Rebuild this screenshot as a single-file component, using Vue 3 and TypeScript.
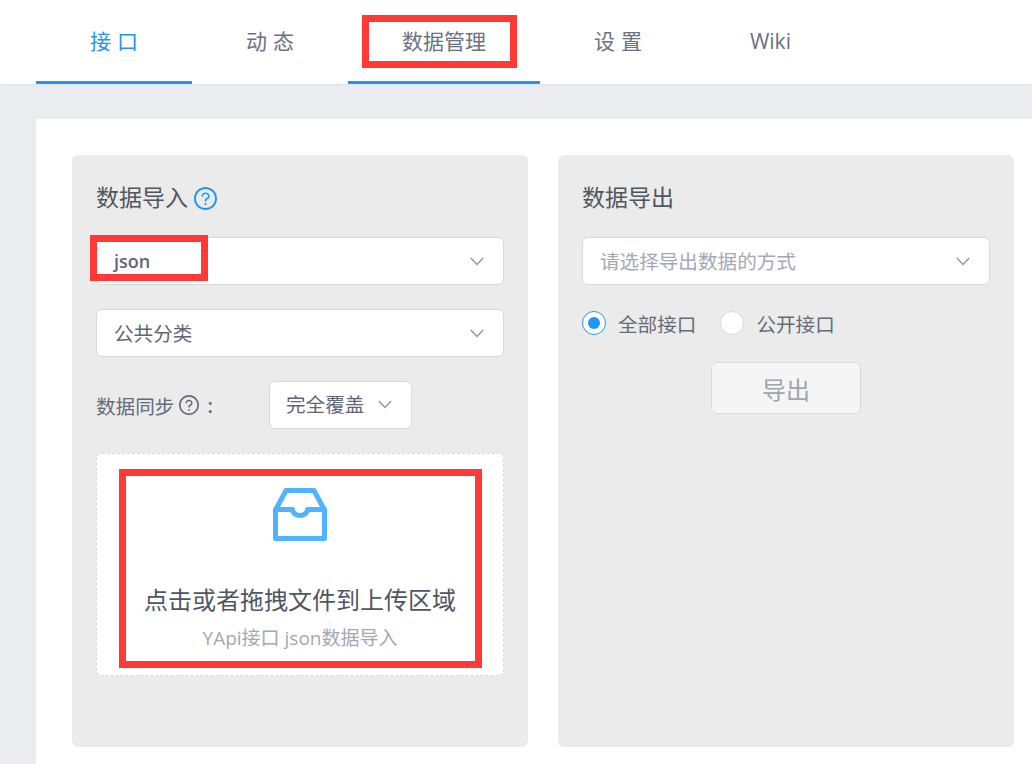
<script setup lang="ts">
const tabs: { label: string; active?: boolean; underlined?: boolean }[] = [
  { label: '接 口', active: true, underlined: true },
  { label: '动 态' },
  { label: '数据管理', underlined: true },
  { label: '设 置' },
  { label: 'Wiki' },
]
const q1 = 'M512 64C264.6 64 64 264.6 64 512s200.6 448 448 448 448-200.6 448-448S759.4 64 512 64zm0 820c-205.4 0-372-166.6-372-372s166.6-372 372-372 372 166.6 372 372-166.6 372-372 372z'
const q2 = 'M623.6 316.7C593.6 290.4 554 276 512 276s-81.6 14.5-111.6 40.7C369.2 344 352 380.7 352 420v7.6c0 4.4 3.6 8 8 8h48c4.4 0 8-3.6 8-8V420c0-44.1 43.1-80 96-80s96 35.9 96 80c0 31.1-22 59.6-56.1 72.7-21.2 8.1-39.2 22.3-52.1 40.9-13.1 19-19.9 41.8-19.9 64.9V620c0 4.4 3.6 8 8 8h48c4.4 0 8-3.6 8-8v-22.7a48.3 48.3 0 0 1 30.9-44.8c59-22.7 97.1-74.7 97.1-132.5.1-39.3-17.1-76-48.3-103.3z'
const q3 = 'M472 732a40 40 0 1 0 80 0 40 40 0 1 0-80 0z'
</script>

<template>
  <div class="page">
    <nav class="tabs">
      <div
        v-for="t in tabs"
        :key="t.label"
        class="tab"
        :class="{ active: t.active, underlined: t.underlined }"
      >{{ t.label }}</div>
      <div class="mark mark-tab"></div>
    </nav>
    <main class="content">
      <div class="card">
        <section class="panel">
          <h3 class="title">
            数据导入
            <svg class="q q-blue" viewBox="64 64 896 896"><path :d="q1" /><path :d="q2" /><path :d="q3" /></svg>
          </h3>
          <div class="select">
            <span class="json">json</span>
            <svg class="chev" viewBox="0 0 16 10"><path d="M1 1l7 7.500L15 1" /></svg>
            <div class="mark mark-json"></div>
          </div>
          <div class="select">
            <span>公共分类</span>
            <svg class="chev" viewBox="0 0 16 10"><path d="M1 1l7 7.500L15 1" /></svg>
          </div>
          <div class="sync">
            <div class="sync-label">
              数据同步
              <svg class="q q-grey" viewBox="64 64 896 896"><path :d="q1" /><path :d="q2" /><path :d="q3" /></svg>
              <span class="colon">:</span>
            </div>
            <div class="select small">
              <span>完全覆盖</span>
              <svg class="chev" viewBox="0 0 16 10"><path d="M1 1l7 7.500L15 1" /></svg>
            </div>
          </div>
          <div class="dragger">
            <svg class="inbox" viewBox="0 0 54 53">
              <path d="M2.500 22L13 2.500h28L51.500 22" />
              <path d="M2.500 21.500H19.500a7.500 6 0 0 0 15 0h17v29h-49z" />
            </svg>
            <p class="drag-text">点击或者拖拽文件到上传区域</p>
            <p class="drag-hint">YApi接口 json数据导入</p>
            <div class="mark mark-drag"></div>
          </div>
        </section>
        <section class="panel">
          <h3 class="title">数据导出</h3>
          <div class="select placeholder">
            <span>请选择导出数据的方式</span>
            <svg class="chev" viewBox="0 0 16 10"><path d="M1 1l7 7.500L15 1" /></svg>
          </div>
          <div class="radios">
            <label class="radio"><i class="dot checked"></i>全部接口</label>
            <label class="radio"><i class="dot"></i>公开接口</label>
          </div>
          <div class="btn-row"><button class="btn" disabled>导出</button></div>
        </section>
      </div>
    </main>
  </div>
</template>

<style>
html, body { margin: 0; background: #ebecf0; overflow: hidden; }
</style>

<style scoped>
* { box-sizing: border-box; }
.page {
  width: 1032px;
  height: 764px;
  overflow: hidden;
  background: #ebecf0;
  font-family: "Open Sans", "Noto Sans CJK SC", sans-serif;
  color: #5b6270;
}
.tabs {
  position: relative;
  display: flex;
  height: 84px;
  padding-left: 36px;
  background: #fff;
  box-shadow: 0 1px 2px rgba(0, 0, 0, 0.04);
}
.tab {
  height: 84px;
  padding: 0 54px;
  font-size: 21px;
  word-spacing: 0.500px;
  line-height: 83px;
  color: #6a7180;
  white-space: pre;
  border-bottom: 3px solid transparent;
}
.tab.underlined { border-bottom-color: #2395f1; }
.tab.active { color: #2395f1; }
.mark {
  position: absolute;
  border: 7px solid #ff3838;
  pointer-events: none;
}
.mark-tab { left: 362px; top: 15px; width: 155px; height: 53px; }
.content { padding: 35px 0 0 36px; }
.card {
  display: flex;
  gap: 30px;
  height: 660px;
  padding: 36px 18px 0 36px;
  background: #fff;
}
.panel {
  width: 456px;
  height: 592px;
  padding: 24px;
  background: #ebebeb;
  border-radius: 6px;
}
.title {
  display: flex;
  align-items: center;
  gap: 6px;
  height: 36px;
  margin: 0 0 22px;
  font-size: 23px;
  font-weight: 400;
  line-height: 36px;
  color: #50565f;
}
.title > .q { margin-top: 2px; }
.q { fill: currentColor; }
.q-blue { width: 23px; height: 23px; color: #2395f1; }
.q-grey { width: 20px; height: 20px; color: #656b78; margin-left: 5px; }
.select {
  position: relative;
  display: flex;
  align-items: center;
  justify-content: space-between;
  height: 48px;
  margin-bottom: 24px;
  padding: 0 19px 2px 17px;
  background: #fff;
  border: 1px solid #d9d9d9;
  border-radius: 6px;
  font-size: 19.600px;
  color: #5f6675;
}
.json { font-weight: 600; font-size: 18px; margin-top: 2px; }
.placeholder { color: #a3a8b4; }
.chev {
  width: 14px;
  height: 9px;
  margin-top: 2px;
  fill: none;
  stroke: #9097a5;
  stroke-width: 1.600;
}
.mark-json { left: -7px; top: -3px; width: 118px; height: 46px; }
.sync { display: flex; align-items: center; margin-bottom: 24px; }
.sync-label {
  display: flex;
  align-items: center;
  width: 173px;
  font-size: 19.600px;
  color: #656b78;
}
.colon { margin-left: 8px; font-weight: 600; }
.select.small {
  width: 143px;
  margin: 0;
  padding-left: 16px;
  padding-bottom: 4px;
}
.dragger {
  position: relative;
  height: 223px;
  padding-top: 34px;
  text-align: center;
  background: #fff;
  border: 1px dashed #d9d9d9;
  border-radius: 6px;
}
.inbox {
  display: block;
  width: 54px;
  height: 53px;
  margin: 0 auto;
  fill: none;
  stroke: #4fb3ff;
  stroke-width: 5;
  stroke-linejoin: round;
}
.drag-text {
  margin: 41px 0 0;
  font-size: 24px;
  line-height: 36px;
  color: #4f5661;
}
.drag-hint {
  margin: 5px 0 0;
  font-size: 19px;
  line-height: 30px;
  color: #a3a8b4;
}
.mark-drag { left: 22px; top: 15px; width: 363px; height: 199px; }
.radios {
  display: flex;
  gap: 24px;
  height: 28px;
  align-items: center;
}
.radio {
  display: flex;
  align-items: center;
  gap: 12px;
  font-size: 19.600px;
  color: #656b78;
}
.dot {
  position: relative;
  width: 24px;
  height: 24px;
  background: #fff;
  border: 1px solid #d9d9d9;
  border-radius: 50%;
}
.dot.checked { border-color: #2395f1; }
.dot.checked::after {
  content: "";
  position: absolute;
  inset: 5px;
  border-radius: 50%;
  background: #2395f1;
}
.btn-row { display: flex; justify-content: center; margin-top: 25px; }
.btn {
  width: 150px;
  height: 52px;
  padding: 0;
  background: #f5f5f5;
  border: 1px solid #d9d9d9;
  border-radius: 6px;
  font-family: inherit;
  font-size: 24px;
  color: #a0a4ac;
}
</style>
